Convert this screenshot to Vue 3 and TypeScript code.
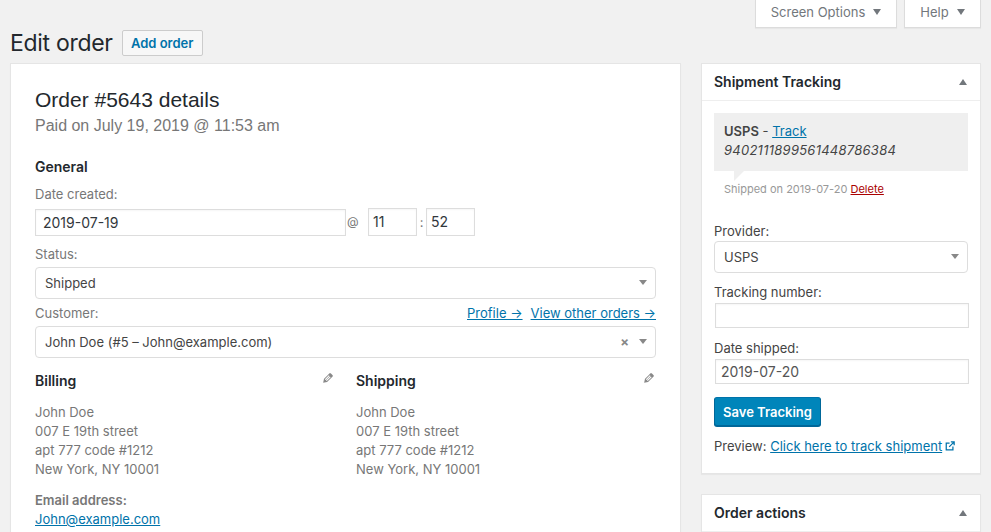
<script setup lang="ts">
const addressLines = ['John Doe', '007 E 19th street', 'apt 777 code #1212', 'New York, NY 10001']
</script>

<template>
  <div class="page">
    <div class="tabs">
      <div class="tab tab-screen">Screen Options<span class="tri"></span></div>
      <div class="tab tab-help">Help<span class="tri"></span></div>
    </div>
    <div class="head">
      <h1>Edit order</h1>
      <a class="add">Add order</a>
    </div>
    <div class="cols">
      <main class="order">
        <h2>Order #5643 details</h2>
        <p class="paid">Paid on July 19, 2019 @ 11:53 am</p>
        <h3 class="general">General</h3>
        <label class="lab lab-date">Date created:</label>
        <div class="date-row">
          <div class="input date">2019-07-19</div>
          <span class="at">@</span>
          <div class="input hour">11</div>
          <span class="colon">:</span>
          <div class="input minute">52</div>
        </div>
        <label class="lab lab-status">Status:</label>
        <div class="select">
          <span>Shipped</span>
          <span class="caret"></span>
        </div>
        <div class="cust-row">
          <label class="lab">Customer:</label>
          <div class="cust-links"><a>Profile →</a><a>View other orders →</a></div>
        </div>
        <div class="select">
          <span>John Doe (#5 – John@example.com)</span>
          <span class="clear">×</span>
          <span class="caret"></span>
        </div>
        <div class="addr">
          <section class="addr-col">
            <div class="addr-head">
              <h3>Billing</h3>
              <svg class="pencil" viewBox="0 0 20 20" aria-hidden="true"><path d="M13.89 3.39l2.71 2.72c.46.46.42 1.24.03 1.64l-8.01 8.02-5.56 1.16 1.16-5.58s7.6-7.63 7.99-8.03c.39-.39 1.22-.39 1.68.07zm-2.73 2.79l-5.59 5.61 1.11 1.11 5.54-5.65zm-2.97 8.23l5.58-5.6-1.07-1.08-5.59 5.6z"/></svg>
            </div>
            <div class="lines"><div v-for="l in addressLines" :key="l">{{ l }}</div></div>
            <div class="email-lab">Email address:</div>
            <a class="email">John@example.com</a>
          </section>
          <section class="addr-col">
            <div class="addr-head">
              <h3>Shipping</h3>
              <svg class="pencil" viewBox="0 0 20 20" aria-hidden="true"><path d="M13.89 3.39l2.71 2.72c.46.46.42 1.24.03 1.64l-8.01 8.02-5.56 1.16 1.16-5.58s7.6-7.63 7.99-8.03c.39-.39 1.22-.39 1.68.07zm-2.73 2.79l-5.59 5.61 1.11 1.11 5.54-5.65zm-2.97 8.23l5.58-5.6-1.07-1.08-5.59 5.6z"/></svg>
            </div>
            <div class="lines"><div v-for="l in addressLines" :key="l">{{ l }}</div></div>
          </section>
        </div>
      </main>
      <aside class="side">
        <section class="box track-box">
          <header class="box-head"><h3>Shipment Tracking</h3><span class="up"></span></header>
          <div class="box-body">
            <div class="note">
              <div><b>USPS</b> - <a>Track</a></div>
              <em>9402111899561448786384</em>
            </div>
            <p class="meta">Shipped on 2019-07-20 <a>Delete</a></p>
            <label class="f-lab f-provider">Provider:</label>
            <div class="select small-sel"><span>USPS</span><span class="caret"></span></div>
            <label class="f-lab f-num">Tracking number:</label>
            <div class="input wide"></div>
            <label class="f-lab f-ship">Date shipped:</label>
            <div class="input wide grey">2019-07-20</div>
            <button class="save" type="button">Save Tracking</button>
            <p class="preview">Preview: <a>Click here to track shipment</a>
              <svg class="ext" viewBox="0 0 12 12" aria-hidden="true"><path d="M5.5 2.5H1.5v8h8v-4M7 1h4v4M11 1L5 7" fill="none" stroke="#0073aa" stroke-width="1.5"/></svg>
            </p>
          </div>
        </section>
        <section class="box">
          <header class="box-head"><h3>Order actions</h3><span class="up"></span></header>
          <div class="box-rest"></div>
        </section>
      </aside>
    </div>
  </div>
</template>

<style>
html, body { margin: 0; background: #f1f1f1; overflow: hidden; }
</style>

<style scoped>
.page {
  width: 991px; height: 532px; overflow: hidden; box-sizing: border-box; position: relative;
  background: #f1f1f1; color: #444; font: 13px/1.4 Inter, "Noto Sans", sans-serif;
  padding: 0 10px;
}
a { color: #0073aa; text-decoration: underline; }
h1, h2, h3, p { margin: 0; }
.tabs { display: flex; justify-content: flex-end; gap: 7px; height: 28px; }
.tab {
  box-sizing: border-box; height: 28px; background: #fff; border: 1px solid #dcdcdc; border-top: 0;
  color: #72777c; display: flex; align-items: center; justify-content: center; font-size: 13px; padding-bottom: 2px;
  box-shadow: 0 1px 1px rgba(0,0,0,.04);
}
.tab-screen { width: 142px; }
.tab-help { width: 77px; }
.tri { width: 0; height: 0; border: 4.5px solid transparent; border-top: 6px solid #72777c; border-bottom: 0; margin-left: 8px; margin-top: -2px; }
.head { display: flex; align-items: center; height: 20px; margin-top: -13px; margin-bottom: 0; padding-top: 15px; height: 26px; }
h1 { font-size: 23px; font-weight: 400; color: #23282d; line-height: 26px; letter-spacing: -.3px; }
.add {
  margin-left: 9px; box-sizing: border-box; height: 26px; width: 81px; border: 1px solid #ccc; border-radius: 2px;
  background: #f7f7f7; font-weight: 600; text-decoration: none; font-size: 13px; line-height: 24px; text-align: center;
}
.cols { display: flex; gap: 20px; margin-top: 7px; align-items: flex-start; }
.order {
  box-sizing: border-box; width: 671px; height: 480px; flex: none; background: #fff; border: 1px solid #e5e5e5;
  padding: 23px 24px 0; box-shadow: 0 1px 1px rgba(0,0,0,.04);
}
h2 { font: 400 21px/26px "Liberation Sans", Arial, sans-serif; color: #23282d; }
.paid { font: 400 16px/24px "Liberation Sans", Arial, sans-serif; color: #777; margin-top: 1px; }
.general { font-size: 14px; line-height: 18px; font-weight: 600; color: #23282d; margin-top: 20px; }
.lab { display: block; color: #777; font-size: 13px; line-height: 18px; }
.lab-date { margin-top: 9px; }
.date-row { display: flex; align-items: center; margin-top: 5px; height: 28px; }
.input {
  box-sizing: border-box; height: 27px; border: 1px solid #ddd; background: #fff; color: #32373c;
  font-size: 14px; line-height: 25px; padding: 0 7px; box-shadow: inset 0 1px 2px rgba(0,0,0,.04);
}
.date { width: 311px; }
.at { color: #777; width: 22px; padding-left: 1px; box-sizing: border-box; font-size: 12px; }
.hour, .minute { width: 49px; height: 28px; padding: 0 4px; }
.colon { width: 9px; text-align: center; color: #777; }
.lab-status { margin-top: 9px; }
.select {
  box-sizing: border-box; height: 32px; border: 1px solid #ddd; border-radius: 4px; background: #fff;
  margin-top: 4px; display: flex; align-items: center; padding: 0 9px; color: #444; font-size: 13px;
}
.caret { width: 0; height: 0; border: 4px solid transparent; border-top: 5px solid #888; border-bottom: 0; margin-left: 10px; margin-right: -1px; margin-top: -1px; }
.select > span:first-child { flex: 1; }
.clear { color: #888; font-weight: 700; font-size: 13px; margin-top: 1px; }
.cust-row { display: flex; justify-content: space-between; align-items: center; margin-top: 5px; height: 18px; }
.cust-links { display: flex; gap: 8px; font-size: 13px; }
.cust-row + .select { margin-top: 4px; }
.addr { display: flex; gap: 21px; margin-top: 13px; }
.addr-col { width: 310px; }
.addr-head { display: flex; justify-content: space-between; height: 22px; padding-right: 0; }
.addr-head h3 { font-size: 14px; line-height: 20px; font-weight: 600; color: #23282d; }
.pencil { width: 14px; height: 14px; fill: #888; margin-top: 0; }
.lines { margin-top: 10px; color: #777; line-height: 19px; font-size: 13px; }
.email-lab { margin-top: 12px; color: #777; font-weight: 600; line-height: 19px; }
.email { display: block; line-height: 19px; }
.side { width: 280px; flex: none; }
.box { background: #fff; border: 1px solid #e5e5e5; box-shadow: 0 1px 1px rgba(0,0,0,.04); box-sizing: border-box; }
.track-box { height: 411px; margin-bottom: 20px; }
.box-head { display: flex; justify-content: space-between; align-items: center; height: 36px; border-bottom: 1px solid #eee; padding: 0 13px 0 12px; }
.box-head h3 { font-size: 14px; font-weight: 600; color: #23282d; line-height: 18px; }
.up { width: 0; height: 0; border: 4px solid transparent; border-bottom: 6px solid #72777c; border-top: 0; }
.box-body { padding: 12px 12px 0; }
.note { background: #efefef; height: 58px; box-sizing: border-box; padding: 9px 10px; position: relative; line-height: 19px; color: #444; }
.note b { font-weight: 600; }
.note em { display: block; letter-spacing: .02em; }
.note::after { content: ""; position: absolute; left: 20px; top: 100%; border-top: 10px solid #efefef; border-right: 10px solid transparent; }
.meta { font-size: 11px; color: #999; margin: 10px 0 0 10px; line-height: 16px; }
.meta a { color: #a00; }
.f-lab { display: block; line-height: 18px; color: #444; font-size: 13px; }
.f-provider { margin-top: 25px; }
.small-sel { margin-top: 1px; width: 254px; }
.f-num { margin-top: 10px; }
.wide { margin: 2px 0 0 1px; width: 254px; height: 25px; }
.f-ship { margin-top: 11px; }
.grey { color: #555; line-height: 23px; padding: 0 5px; }
.save {
  display: block; margin-top: 13px; width: 107px; height: 29px; box-sizing: border-box; background: #0085ba; color: #fff;
  border: 1px solid #006799; border-color: #0073aa #006799 #006799; border-radius: 3px; box-shadow: 0 1px 0 #006799;
  font: 600 13px/26px Inter, sans-serif; padding: 0;
}
.preview { margin-top: 11px; line-height: 18px; }
.ext { width: 10px; height: 10px; margin-left: 3px; }
.box-rest { height: 30px; }
</style>
